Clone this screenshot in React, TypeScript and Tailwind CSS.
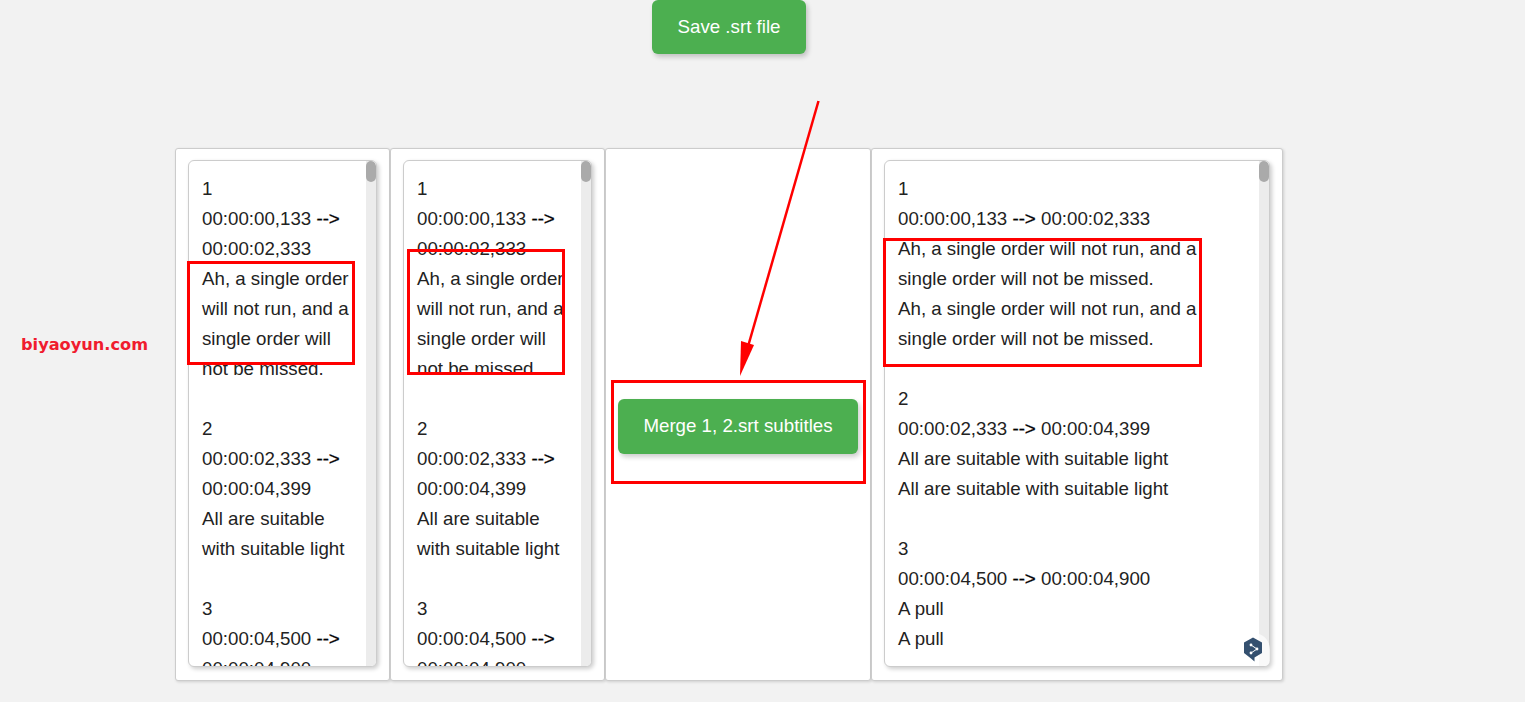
const leftText = [
  ["1"],
  ["00:00:00,133 ", "-->", " 00:00:02,333"],
  ["Ah, a single order will not run, and a single order will not be missed."],
  [""],
  ["2"],
  ["00:00:02,333 ", "-->", " 00:00:04,399"],
  ["All are suitable with suitable light"],
  [""],
  ["3"],
  ["00:00:04,500 ", "-->", " 00:00:04,900"],
];

const rightText = [
  ["1"],
  ["00:00:00,133 ", "-->", " 00:00:02,333"],
  ["Ah, a single order will not run, and a single order will not be missed."],
  ["Ah, a single order will not run, and a single order will not be missed."],
  [""],
  ["2"],
  ["00:00:02,333 ", "-->", " 00:00:04,399"],
  ["All are suitable with suitable light"],
  ["All are suitable with suitable light"],
  [""],
  ["3"],
  ["00:00:04,500 ", "-->", " 00:00:04,900"],
  ["A pull"],
  ["A pull"],
];

const SrtBox = ({ lines, width }: { lines: string[][]; width: string }) => (
  <div
    className={`flex h-[507px] ${width} overflow-hidden rounded-[6px] border border-[#ccc] bg-white shadow-[2px_2px_4px_rgba(0,0,0,0.2)]`}
  >
    <div className="flex-1 overflow-hidden pl-[13px] pr-[13px] pt-[13px] text-[18.72px] leading-[30px] text-[#222]">
      {lines.map((line, i) => (
        <div key={i} className="min-h-[30px]">
          {line.length === 3 ? (
            <>
              {line[0]}
              <span className="text-black [-webkit-text-stroke:0.3px_black]">{line[1]}</span>
              {line[2]}
            </>
          ) : (
            line[0]
          )}
        </div>
      ))}
    </div>
    <div className="w-[10px] shrink-0 bg-[#ececec]">
      <div className="h-[21px] w-[10px] rounded-[5px] bg-[#aaa]" />
    </div>
  </div>
);

const RedBox = ({ className }: { className: string }) => (
  <div className={`absolute border-[3px] border-[#f00] ${className}`} />
);

export default function App() {
  return (
    <div className="relative h-[702px] overflow-hidden bg-[#f2f2f2] font-['Liberation_Sans',sans-serif]">
      <button className="ml-[652px] block h-[54px] w-[154px] rounded-[6px] bg-[#4caf50] text-[18.72px] text-white shadow-[2px_3px_5px_rgba(0,0,0,0.2)]">
        Save .srt file
      </button>

      <div className="ml-[175px] mt-[94px] flex items-start">
        <div className="h-[533px] rounded-[3px] border border-[#ccc] bg-white pl-[12px] pr-[12px] pt-[11px] shadow-[1px_1px_3px_rgba(0,0,0,0.15)]">
          <SrtBox lines={leftText} width="w-[189px]" />
        </div>
        <div className="h-[533px] rounded-[3px] border border-[#ccc] bg-white pl-[12px] pr-[12px] pt-[11px] shadow-[1px_1px_3px_rgba(0,0,0,0.15)]">
          <SrtBox lines={leftText} width="w-[189px]" />
        </div>
        <div className="flex h-[533px] w-[266px] items-center rounded-[3px] border border-[#ccc] bg-white pl-[12px] pt-[24px] shadow-[1px_1px_3px_rgba(0,0,0,0.15)]">
          <button className="h-[55px] w-[240px] rounded-[6px] bg-[#4caf50] text-[18.72px] text-white shadow-[2px_3px_5px_rgba(0,0,0,0.2)]">
            Merge 1, 2.srt subtitles
          </button>
        </div>
        <div className="h-[533px] rounded-[3px] border border-[#ccc] bg-white pl-[12px] pr-[12px] pt-[11px] shadow-[1px_1px_3px_rgba(0,0,0,0.15)]">
          <SrtBox lines={rightText} width="w-[386px]" />
        </div>
      </div>

      {/* annotations drawn over the screenshot */}
      <RedBox className="left-[187px] top-[261px] h-[104px] w-[168px]" />
      <RedBox className="left-[407px] top-[249px] h-[126px] w-[158px]" />
      <RedBox className="left-[883px] top-[238px] h-[129px] w-[319px]" />
      <RedBox className="left-[611px] top-[380px] h-[104px] w-[255px]" />

      <svg className="absolute left-[730px] top-[95px]" width="100" height="285" viewBox="730 95 100 285">
        <line x1="818.5" y1="101" x2="747" y2="350" stroke="#f00" strokeWidth="2.5" />
        <polygon points="740,376 741,341 754,345" fill="#f00" />
      </svg>

      <div className="absolute left-[21px] top-[334px] font-['DejaVu_Sans',sans-serif] text-[16.2px] font-bold leading-[22px] text-[#f01c2e]">
        biyaoyun.com
      </div>

      <div className="absolute left-[1235px] top-[633px] flex h-[33px] w-[35px] items-center justify-center rounded-[18px_18px_6px_18px] bg-white/70">
        <svg width="20" height="25" viewBox="0 0 20 25">
          <path d="M10 0.5 L19 5.5 V16 L11.5 20.5 L11.5 24.5 L8 21.5 L1 16 V5.5 Z" fill="#34506f" />
          <path d="M8 8 L14 12 L8 16" fill="none" stroke="#fff" strokeWidth="1" />
          <circle cx="8" cy="8" r="1.4" fill="#fff" />
          <circle cx="14" cy="12" r="1.4" fill="#fff" />
          <circle cx="8" cy="16" r="1.4" fill="#fff" />
        </svg>
      </div>
    </div>
  );
}
